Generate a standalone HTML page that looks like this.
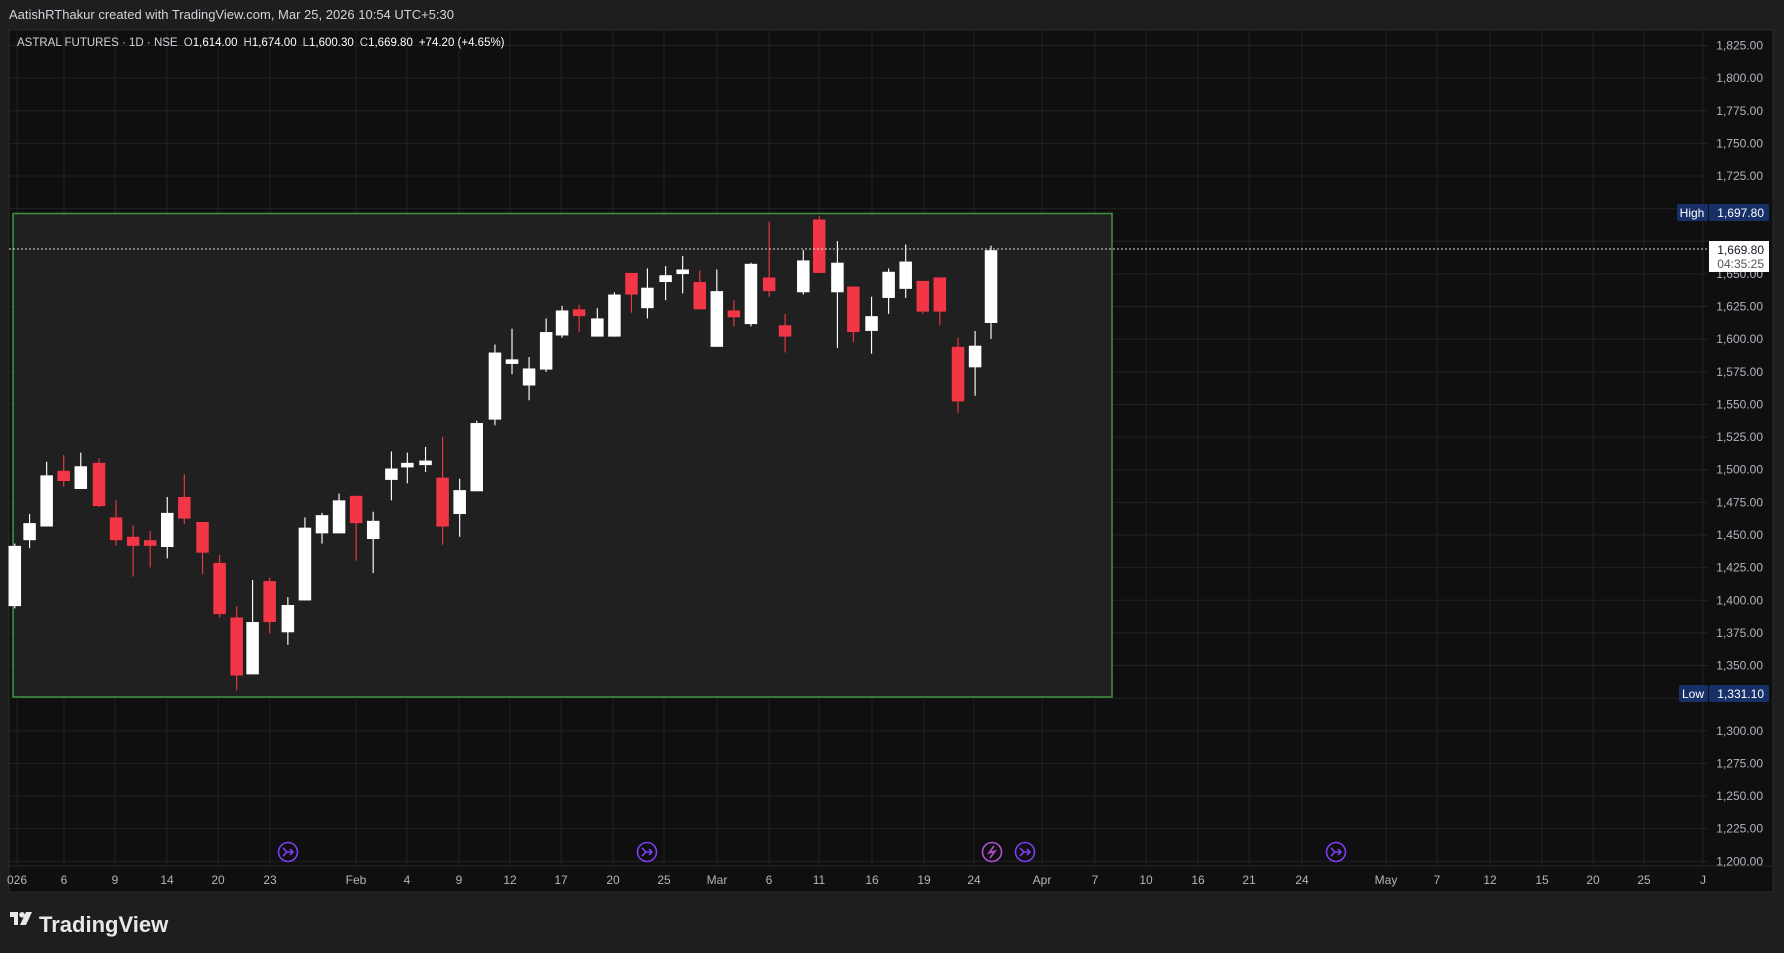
<!DOCTYPE html>
<html><head><meta charset="utf-8">
<style>
html,body{margin:0;padding:0;background:#1e1e1e;width:1784px;height:953px;overflow:hidden;font-family:"Liberation Sans",sans-serif}
svg{position:absolute;left:0;top:0}
text{font-family:"Liberation Sans",sans-serif}
</style></head><body>
<svg id="s" width="1784" height="953" viewBox="0 0 1784 953" xmlns="http://www.w3.org/2000/svg">
<rect x="0" y="0" width="1784" height="953" fill="#1e1e1e"/>
<rect x="9" y="30" width="1764" height="862" fill="#0f0f0f" stroke="#2a2a2a" stroke-width="1"/>
<g id="grid"></g>
<rect x="13" y="213.5" width="1099" height="483.5" fill="#202020" stroke="#3f8e3f" stroke-width="1.6"/>
<g id="cand" transform="scale(1.1378 1.1372)"></g>
<line x1="9" y1="249" x2="1708" y2="249" stroke="#e0e0e0" stroke-width="1" stroke-dasharray="2 2"/>
<line x1="9" y1="866" x2="1773" y2="866" stroke="#2a2a2a"/>
<g id="plab" font-size="12" fill="#b2b5be" text-anchor="end"></g>
<g id="tlab" font-size="12" fill="#b2b5be" text-anchor="middle"></g>
<text x="9" y="19" font-size="13" fill="#d1d4dc">AatishRThakur created with TradingView.com, Mar 25, 2026 10:54 UTC+5:30</text>
<text x="17" y="46" font-size="11.5" fill="#d1d4dc">ASTRAL FUTURES · 1D · NSE  <tspan dx="3">O</tspan><tspan fill="#fff">1,614.00</tspan><tspan dx="6">H</tspan><tspan fill="#fff">1,674.00</tspan><tspan dx="6">L</tspan><tspan fill="#fff">1,600.30</tspan><tspan dx="6">C</tspan><tspan fill="#fff">1,669.80</tspan><tspan dx="6" fill="#fff">+74.20 (+4.65%)</tspan></text>
<rect x="1677" y="204" width="31" height="17" rx="2" fill="#173168"/>
<rect x="1709" y="204" width="60" height="17" rx="2" fill="#173168"/>
<text x="1692" y="217" font-size="12" fill="#fff" text-anchor="middle">High</text>
<text x="1764" y="217" font-size="12" fill="#fff" text-anchor="end">1,697.80</text>
<rect x="1679" y="685" width="29" height="17" rx="2" fill="#173168"/>
<rect x="1709" y="685" width="60" height="17" rx="2" fill="#173168"/>
<text x="1693" y="698" font-size="12" fill="#fff" text-anchor="middle">Low</text>
<text x="1764" y="698" font-size="12" fill="#fff" text-anchor="end">1,331.10</text>
<rect x="1709" y="241" width="60" height="31" fill="#fff"/>
<text x="1764" y="254" font-size="12" fill="#131722" text-anchor="end">1,669.80</text>
<text x="1764" y="268" font-size="12" fill="#555" text-anchor="end">04:35:25</text>
<g id="ev" fill="none" stroke-width="1.6"></g>
<g transform="translate(10,912)" fill="#e8e8e8">
<rect x="0" y="0" width="8" height="5"/><rect x="4" y="0" width="4" height="13"/>
<circle cx="12" cy="2.8" r="2.8"/>
<polygon points="16,0 22,0 16,13 10,13"/>
</g>
<text x="39" y="932" font-size="22" fill="#e8e8e8" style="font-weight:600">TradingView</text>
</svg>
<script>
var NS="http://www.w3.org/2000/svg";
function el(p,t,a){var e=document.createElementNS(NS,t);for(var k in a)e.setAttribute(k,a[k]);p.appendChild(e);return e;}
var g=document.getElementById('grid'),pl=document.getElementById('plab'),tl=document.getElementById('tlab');
for(var p=1825;p>=1200;p-=25){var y=45.5+(1825-p)*1.3053;
 el(g,'line',{x1:9,y1:y,x2:1708,y2:y,stroke:'#222',"stroke-width":1});
 if(p!=1700&&p!=1675&&p!=1325){var t=el(pl,'text',{x:1763,y:y+4});t.textContent=p.toLocaleString('en-US')+'.00';}}
var T=[[17,'026'],[64,'6'],[115,'9'],[167,'14'],[218,'20'],[270,'23'],[356,'Feb'],[407,'4'],[459,'9'],[510,'12'],[561,'17'],[613,'20'],[664,'25'],[717,'Mar'],[769,'6'],[819,'11'],[872,'16'],[924,'19'],[974,'24'],[1042,'Apr'],[1095,'7'],[1146,'10'],[1198,'16'],[1249,'21'],[1302,'24'],[1386,'May'],[1437,'7'],[1490,'12'],[1542,'15'],[1593,'20'],[1644,'25'],[1703,'J']];
T.forEach(function(a){el(g,'line',{x1:a[0],y1:30,x2:a[0],y2:866,stroke:'#222'});var t=el(tl,'text',{x:a[0],y:884});t.textContent=a[1];});
var C=[[13,'w',480,533,478,535],[26,'w',460,475,452,482],[41,'w',418,463,406,463],[56,'r',414,423,400,428],[71,'w',410,430,398,430],[87,'r',407,445,403,446],[102,'r',455,475,440,480],[117,'r',472,480,462,507],[132,'r',475,480,467,499],[147,'w',451,481,437,491],[162,'r',437,456,417,461],[178,'r',459,486,459,505],[193,'r',495,540,488,543],[208,'r',543,594,533,607],[222,'w',547,593,510,593],[237,'r',511,547,508,557],[253,'w',532,556,525,567],[268,'w',464,528,455,528],[283,'w',453,469,451,478],[298,'w',440,469,434,469],[313,'r',436,460,436,493],[328,'w',458,474,450,504],[344,'w',412,422,397,440],[358,'w',407,411,398,425],[374,'w',405,409,393,415],[389,'r',420,463,384,479],[404,'w',431,452,421,472],[419,'w',372,432,370,432],[435,'w',310,369,303,374],[450,'w',316,320,289,329],[465,'w',324,339,314,352],[480,'w',292,325,280,327],[494,'w',273,295,269,297],[509,'r',272,278,268,292],[525,'w',280,296,271,296],[540,'w',259,296,257,296],[555,'r',240,259,240,275],[569,'w',253,271,236,280],[585,'w',242,248,234,264],[600,'w',237,241,225,258],[615,'r',248,272,238,272],[630,'w',256,305,237,305],[645,'r',273,279,264,287],[660,'w',232,285,231,287],[676,'r',244,256,195,261],[690,'r',286,296,276,310],[706,'w',229,257,220,259],[720,'r',193,240,190,240],[736,'w',231,257,212,306],[750,'r',252,292,252,301],[766,'w',278,291,261,311],[781,'w',239,262,236,276],[796,'w',230,254,215,262],[811,'r',247,274,247,276],[826,'r',244,274,244,286],[842,'r',305,353,297,363],[857,'w',304,323,291,348],[871,'w',220,284,216,298]];
var cg=document.getElementById('cand');
C.forEach(function(c){var col=c[1]=='w'?'#ffffff':'#f23645';
 el(cg,'rect',{x:c[0]-0.5,y:c[4],width:1,height:c[5]-c[4],fill:col});
 el(cg,'rect',{x:c[0]-5.5,y:c[2],width:11,height:Math.max(2,c[3]-c[2]),fill:col});});
var ev=document.getElementById('ev');
[[288,'#7b3ff2'],[647,'#7b3ff2'],[992,'#b04fd0',1],[1025,'#7b3ff2'],[1336,'#7b3ff2']].forEach(function(e){
 el(ev,'circle',{cx:e[0],cy:852,r:9.5,stroke:e[1]});
 if(e[2]) el(ev,'path',{d:'M'+(e[0]+2)+' 846 L'+(e[0]-3)+' 853 L'+(e[0]+3)+' 851 L'+(e[0]-2)+' 858',stroke:e[1]});
 else el(ev,'path',{d:'M'+(e[0]-5)+' 848 L'+(e[0]-1)+' 852 L'+(e[0]-5)+' 856 M'+(e[0]-1)+' 852 L'+(e[0]+5)+' 852 M'+(e[0]+2)+' 849 L'+(e[0]+5)+' 852 L'+(e[0]+2)+' 855',stroke:e[1]});
});
</script>
</body></html>
